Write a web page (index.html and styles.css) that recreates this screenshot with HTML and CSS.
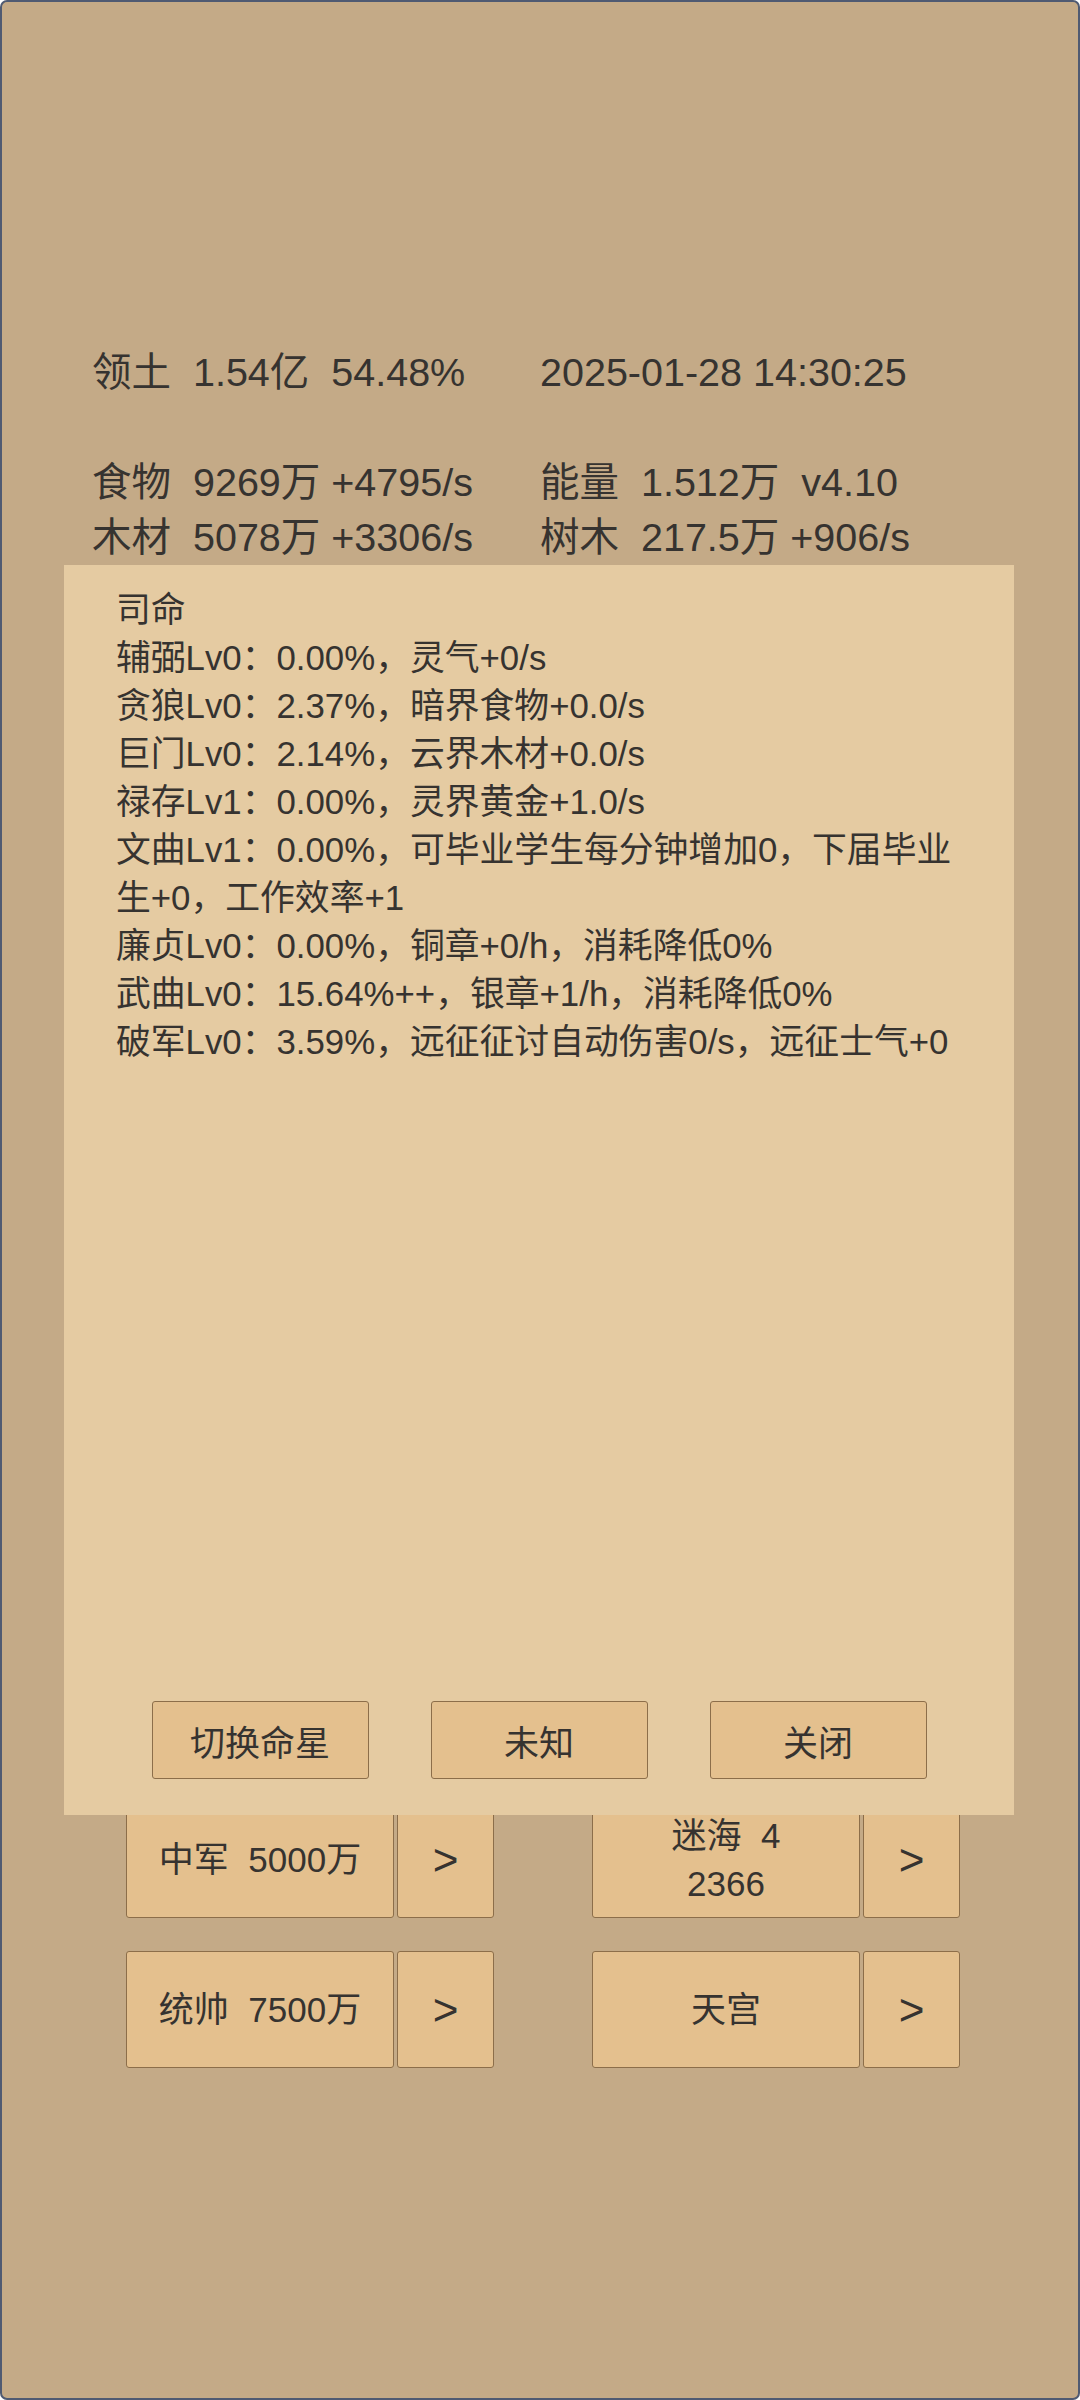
FILE: index.html
```html
<!DOCTYPE html>
<html lang="zh">
<head>
<meta charset="utf-8">
<title>司命</title>
<link rel="stylesheet" href="styles.css">
</head>
<body>
<div class="screen">
  <div class="stats">
    <div class="cell">领土  1.54亿  54.48%</div>
    <div class="cell">2025-01-28 14:30:25</div>
    <div class="cell blank"> </div>
    <div class="cell blank"> </div>
    <div class="cell">食物  9269万 +4795/s</div>
    <div class="cell">能量  1.512万  v4.10</div>
    <div class="cell">木材  5078万 +3306/s</div>
    <div class="cell">树木  217.5万 +906/s</div>
  </div>

  <div class="grid">
    <div class="row">
      <div class="group">
        <div class="btn big">中军  5000万</div>
        <div class="btn arrow">&gt;</div>
      </div>
      <div class="group">
        <div class="btn big">迷海  4<br>2366</div>
        <div class="btn arrow">&gt;</div>
      </div>
    </div>
    <div class="row">
      <div class="group">
        <div class="btn big">统帅  7500万</div>
        <div class="btn arrow">&gt;</div>
      </div>
      <div class="group">
        <div class="btn big">天宫</div>
        <div class="btn arrow">&gt;</div>
      </div>
    </div>
  </div>

  <div class="modal">
    <div class="modal-text">
      <div>司命</div>
      <div>辅弼Lv0：0.00%，灵气+0/s</div>
      <div>贪狼Lv0：2.37%，暗界食物+0.0/s</div>
      <div>巨门Lv0：2.14%，云界木材+0.0/s</div>
      <div>禄存Lv1：0.00%，灵界黄金+1.0/s</div>
      <div>文曲Lv1：0.00%，可毕业学生每分钟增加0，下届毕业生+0，工作效率+1</div>
      <div>廉贞Lv0：0.00%，铜章+0/h，消耗降低0%</div>
      <div>武曲Lv0：15.64%++，银章+1/h，消耗降低0%</div>
      <div>破军Lv0：3.59%，远征征讨自动伤害0/s，远征士气+0</div>
    </div>
    <div class="modal-actions">
      <div class="mbtn">切换命星</div>
      <div class="mbtn">未知</div>
      <div class="mbtn">关闭</div>
    </div>
  </div>
</div>
</body>
</html>
```

FILE: styles.css
```css
html, body {
  margin: 0;
  padding: 0;
}
body {
  width: 1080px;
  height: 2400px;
  font-family: "Liberation Sans", "Noto Sans CJK SC", sans-serif;
  color: #363330;
}
.screen {
  position: relative;
  box-sizing: border-box;
  width: 1080px;
  height: 2400px;
  background: #c4aa87;
  border: 2px solid #4f5a72;
  border-radius: 7px;
  overflow: hidden;
}
.stats {
  display: grid;
  grid-template-columns: 448px 1fr;
  padding: 343px 0 0 90px;
  font-size: 39.5px;
  line-height: 55px;
  white-space: pre;
}
.grid {
  display: flex;
  flex-direction: column;
  gap: 33px;
  margin-top: 1236px;
  padding-left: 124px;
}
.row {
  display: flex;
  gap: 98px;
  height: 117px;
}
.group {
  display: flex;
  gap: 3px;
}
.btn {
  box-sizing: border-box;
  display: flex;
  align-items: center;
  justify-content: center;
  text-align: center;
  background: #e4c08e;
  border: 1px solid #8c6e4a;
  border-radius: 3px;
  font-size: 35px;
  line-height: 48px;
  white-space: pre;
}
.big {
  width: 268px;
}
.arrow {
  width: 97px;
  font-size: 44px;
}
.modal {
  position: absolute;
  left: 62px;
  top: 563px;
  width: 950px;
  height: 1250px;
  box-sizing: border-box;
  background: #e5cba2;
  display: flex;
  flex-direction: column;
  padding: 21px 40px 36px 52px;
}
.modal-text {
  font-size: 34.8px;
  line-height: 48px;
}
.modal-actions {
  margin-top: auto;
  display: flex;
  justify-content: center;
  gap: 62px;
  margin-left: -52px;
  margin-right: -40px;
}
.mbtn {
  box-sizing: border-box;
  width: 217px;
  height: 78px;
  display: flex;
  align-items: center;
  justify-content: center;
  background: #e4c08e;
  border: 1px solid #8c6e4a;
  border-radius: 3px;
  font-size: 35px;
}
```
